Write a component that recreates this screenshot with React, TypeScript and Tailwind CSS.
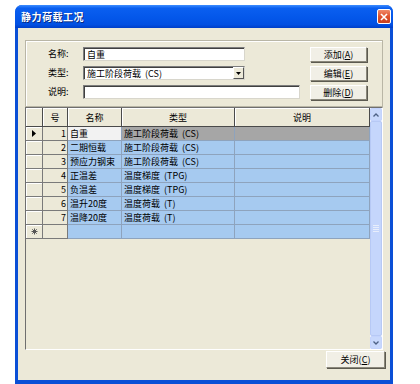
import React from "react";

const font = { fontFamily: '"Noto Sans CJK SC", "Liberation Sans", sans-serif' };

interface Row {
  no: number;
  name: string;
  type: string;
}

const rows: Row[] = [
  { no: 1, name: "自重", type: "施工阶段荷载  (CS)" },
  { no: 2, name: "二期恒载", type: "施工阶段荷载  (CS)" },
  { no: 3, name: "预应力钢束", type: "施工阶段荷载  (CS)" },
  { no: 4, name: "正温差", type: "温度梯度  (TPG)" },
  { no: 5, name: "负温差", type: "温度梯度  (TPG)" },
  { no: 6, name: "温升20度", type: "温度荷载  (T)" },
  { no: 7, name: "温降20度", type: "温度荷载  (T)" },
];

const XpButton = ({ label, keyChar, className }: { label: string; keyChar: string; className: string }) => (
  <button
    className={`flex items-center justify-center bg-[#f1efe6] border border-t-white border-l-white border-r-[#8a877a] border-b-[#8a877a] shadow-[1px_1px_0_#5c5a50] text-[9px] text-black leading-none ${className}`}
  >
    {label}(<span className="underline">{keyChar}</span>)
  </button>
);

const Field = ({ children, className }: { children?: React.ReactNode; className: string }) => (
  <div
    className={`h-[14px] bg-white border border-t-[#7d7d7d] border-l-[#7d7d7d] border-r-[#d8d6cc] border-b-[#d8d6cc] shadow-[inset_1px_1px_0_#404040] flex items-center pl-[3px] text-[9px] text-black leading-none whitespace-pre ${className}`}
  >
    {children}
  </div>
);

const App: React.FC = () => {
  return (
    <div className="w-[420px] h-[384px] bg-white pt-[5px] pl-[15px]" style={font}>
      <div className="w-[378px] h-[379px] flex flex-col rounded-t-[7px] overflow-hidden bg-[#0a4fd6]">
        {/* title bar */}
        <div className="h-[23px] flex items-center justify-between pl-[6px] pr-[2px] bg-[linear-gradient(180deg,#3d8dff_0%,#0a5ff0_14%,#0457ea_55%,#0250e2_85%,#003fc8_100%)]">
          <span className="text-white font-bold text-[10px] tracking-[0.5px] [text-shadow:1px_1px_0_#0a2a80]">静力荷载工况</span>
          <div className="w-[14px] h-[15px] rounded-[2px] border border-white bg-[linear-gradient(180deg,#f08a6a_0%,#e0512c_50%,#c8401e_100%)] flex items-center justify-center">
            <svg width="8" height="8" viewBox="0 0 8 8">
              <path d="M1 1 L7 7 M7 1 L1 7" stroke="white" strokeWidth="1.6" />
            </svg>
          </div>
        </div>

        {/* body */}
        <div className="flex-1 mx-[3px] mb-[4px] bg-[#ece9d8] flex flex-col pt-[12px]">
          {/* group box */}
          <div className="mx-[7px] h-[67px] border border-[#b9b6a6] shadow-[inset_1px_1px_0_#fff] flex pt-[6px] pl-[22px]">
            <div className="flex flex-col gap-[5px]">
              <div className="flex items-center h-[14px]">
                <span className="w-[35px] text-[9px] text-black">名称:</span>
                <Field className="w-[162px]">自重</Field>
              </div>
              <div className="flex items-center h-[14px]">
                <span className="w-[35px] text-[9px] text-black">类型:</span>
                <Field className="w-[162px] pr-0 justify-between">
                  <span>施工阶段荷载  (CS)</span>
                  <div className="w-[11px] h-[12px] bg-[#ece9d8] border border-t-white border-l-white border-r-[#555] border-b-[#555] flex items-center justify-center">
                    <svg width="5" height="3" viewBox="0 0 5 3">
                      <polygon points="0,0 5,0 2.5,3" fill="black" />
                    </svg>
                  </div>
                </Field>
              </div>
              <div className="flex items-center h-[14px]">
                <span className="w-[35px] text-[9px] text-black">说明:</span>
                <Field className="w-[217px]" />
              </div>
            </div>
            <div className="flex flex-col gap-[4px] ml-[10px]">
              <XpButton label="添加" keyChar="A" className="w-[57px] h-[15px]" />
              <XpButton label="编辑" keyChar="E" className="w-[57px] h-[15px]" />
              <XpButton label="删除" keyChar="D" className="w-[57px] h-[15px]" />
            </div>
          </div>

          {/* grid */}
          <div className="mx-[7px] h-[243px] flex border border-t-[#6f6f6f] border-l-[#6f6f6f] border-r-white border-b-white bg-[#ece9d8]">
            <div className="w-[344px] flex flex-col text-[9px] text-black leading-none">
              <div className="flex h-[19px]">
                <div className="w-[17px] border-r border-b border-[#4a4a4a] shadow-[inset_1px_1px_0_#fff]" />
                <div className="w-[25px] border-r border-b border-[#4a4a4a] shadow-[inset_1px_1px_0_#fff] flex items-center justify-center">号</div>
                <div className="w-[54px] border-r border-b border-[#4a4a4a] shadow-[inset_1px_1px_0_#fff] flex items-center justify-center">名称</div>
                <div className="w-[113px] border-r border-b border-[#4a4a4a] shadow-[inset_1px_1px_0_#fff] flex items-center justify-center">类型</div>
                <div className="w-[135px] border-r border-b border-[#4a4a4a] shadow-[inset_1px_1px_0_#fff] flex items-center justify-center">说明</div>
              </div>
              {rows.map((r) => {
                const first = r.no === 1;
                return (
                  <div key={r.no} className="flex h-[14px]">
                    <div className="w-[17px] border-r border-b border-[#7a7a7a] shadow-[inset_1px_1px_0_#fff] flex items-center justify-center">
                      {first && (
                        <svg width="4" height="7" viewBox="0 0 4 7">
                          <polygon points="0,0 4,3.5 0,7" fill="black" />
                        </svg>
                      )}
                    </div>
                    <div className="w-[25px] border-r border-b border-[#7a7a7a] flex items-center justify-end pr-[1px]">{r.no}</div>
                    <div className={`w-[54px] border-r border-b border-[#8ea3bd] flex items-center pl-[2px] ${first ? "bg-[#f2f2f2]" : "bg-[#a6caf0]"}`}>{r.name}</div>
                    <div className={`w-[113px] border-r border-b border-[#8ea3bd] flex items-center pl-[2px] whitespace-pre ${first ? "bg-[#a6a6a6]" : "bg-[#a6caf0]"}`}>{r.type}</div>
                    <div className={`w-[135px] border-r border-b border-[#8ea3bd] ${first ? "bg-[#a6a6a6]" : "bg-[#a6caf0]"}`} />
                  </div>
                );
              })}
              <div className="flex h-[14px]">
                <div className="w-[17px] border-r border-b border-[#7a7a7a] shadow-[inset_1px_1px_0_#fff] flex items-center justify-center">
                  <svg width="7" height="7" viewBox="0 0 7 7">
                    <path d="M3.5 0.5 V6.5 M0.5 3.5 H6.5 M1.3 1.3 L5.7 5.7 M5.7 1.3 L1.3 5.7" stroke="#555" strokeWidth="1" />
                  </svg>
                </div>
                <div className="w-[25px] border-r border-b border-[#7a7a7a]" />
                <div className="w-[54px] border-r border-b border-[#8ea3bd] bg-[#a6caf0]" />
                <div className="w-[113px] border-r border-b border-[#8ea3bd] bg-[#a6caf0]" />
                <div className="w-[135px] border-r border-b border-[#8ea3bd] bg-[#a6caf0]" />
              </div>
            </div>

            {/* scrollbar */}
            <div className="w-[12px] flex flex-col bg-[#eef2fc]">
              <div className="h-[13px] rounded-[2px] border border-[#c3d3fd] bg-[#c8d8fc] flex items-center justify-center">
                <svg width="6" height="4" viewBox="0 0 6 4">
                  <path d="M0.5 3.5 L3 1 L5.5 3.5" stroke="#4d6185" strokeWidth="1.3" fill="none" />
                </svg>
              </div>
              <div className="flex-1 rounded-[2px] border border-[#b7c9f5] bg-[#c5d6fc] flex flex-col items-center justify-center gap-[1px]">
                <div className="w-[6px] h-[1px] bg-[#e8eefc]" />
                <div className="w-[6px] h-[1px] bg-[#e8eefc]" />
                <div className="w-[6px] h-[1px] bg-[#e8eefc]" />
                <div className="w-[6px] h-[1px] bg-[#e8eefc]" />
              </div>
              <div className="h-[13px] rounded-[2px] border border-[#c3d3fd] bg-[#c8d8fc] flex items-center justify-center">
                <svg width="6" height="4" viewBox="0 0 6 4">
                  <path d="M0.5 0.5 L3 3 L5.5 0.5" stroke="#4d6185" strokeWidth="1.3" fill="none" />
                </svg>
              </div>
            </div>
          </div>

          {/* footer */}
          <div className="flex justify-end pr-[5px] mt-[1px]">
            <XpButton label="关闭" keyChar="C" className="w-[59px] h-[17px]" />
          </div>
        </div>
      </div>
    </div>
  );
};

export default App;
